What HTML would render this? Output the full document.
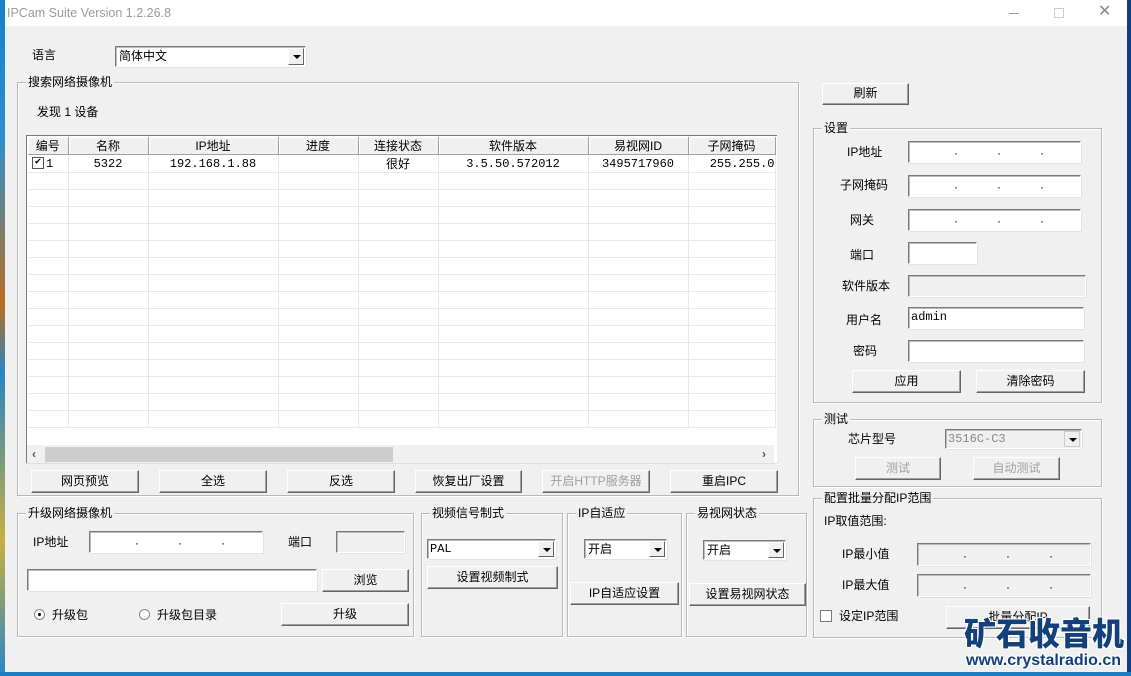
<!DOCTYPE html>
<html><head><meta charset="utf-8"><style>
*{box-sizing:border-box;margin:0;padding:0}
body{width:1131px;height:676px;overflow:hidden;background:#f0f0f0;position:relative;font-family:"Liberation Sans","Noto Sans CJK SC",sans-serif;font-size:12px;color:#000}
.a{position:absolute;white-space:nowrap;line-height:14px}
.btn{position:absolute;background:#f0f0f0;border-top:1px solid #fff;border-left:1px solid #fff;border-right:1px solid #646464;border-bottom:1px solid #646464;box-shadow:inset -1px -1px 0 #a0a0a0;text-align:center;font-size:12px}
.dis{color:#a0a0a0}
.in{position:absolute;background:#fff;border-top:1px solid #7a7a7a;border-left:1px solid #7a7a7a;border-right:1px solid #fff;border-bottom:1px solid #fff;box-shadow:inset 1px 1px 0 #bcbcbc, 1px 1px 0 #e3e3e3}
.g{background:#f0f0f0}
.grp{position:absolute;border:1px solid #b8b8b8;box-shadow:inset 1px 1px 0 #fff,1px 1px 0 #fff}
.gt{position:absolute;top:-8px;left:8px;background:#f0f0f0;padding:0 2px;line-height:14px;white-space:nowrap}
.dots{position:absolute;font-size:12px;line-height:12px}
.arr{position:absolute;right:1px;top:1px;bottom:1px;width:16px;background:#f0f0f0;border-left:1px solid #fff;border-top:1px solid #fff;border-right:1px solid #646464;border-bottom:1px solid #646464}
.arr:after{content:"";position:absolute;left:4px;top:6px;border-left:4px solid transparent;border-right:4px solid transparent;border-top:4px solid #000}
table{border-collapse:collapse;position:absolute;left:28px;top:137px;font-family:"Liberation Mono","Noto Sans CJK SC",monospace;font-size:12px}
td,th{border-right:1px solid #e8e8e8;border-bottom:1px solid #e8e8e8;height:17px;padding:0;text-align:center;font-weight:normal;white-space:nowrap;overflow:hidden}
th{background:#f0f0f0;border-right:1px solid #a0a0a0;border-bottom:1px solid #a0a0a0;box-shadow:inset 1px 1px 0 #fff;font-family:"Liberation Sans","Noto Sans CJK SC",sans-serif;height:17px}
</style></head><body>
<div style="position:absolute;left:0;top:0;width:5px;height:676px;background:linear-gradient(#1680c8,#2b8fd0 20%,#b86e22 45%,#2a84c4 55%,#c8b040 80%,#2a84c4)"></div>
<div style="position:absolute;left:1127px;top:0;width:4px;height:676px;background:#123c8c"></div>
<div style="position:absolute;left:0;top:672px;width:1131px;height:4px;background:#1a7ec0"></div>
<div style="position:absolute;left:5px;top:0;width:1122px;height:26px;background:#fff"></div>
<div class="a" style="left:7px;top:6px;color:#9a9a9a;font-size:12.5px">IPCam Suite Version 1.2.26.8</div>
<div style="position:absolute;left:1009px;top:13px;width:10px;height:1px;background:#999"></div>
<div style="position:absolute;left:1054px;top:8px;width:10px;height:10px;border:1px solid #ccc"></div>
<div class="a" style="left:1098px;top:5px;color:#888;font-size:16px">✕</div>

<div class="a" style="left:32px;top:48px">语言</div>
<div class="in" style="left:115px;top:46px;width:191px;height:21px"><span class="a" style="left:3px;top:2px">简体中文</span><div class="arr"></div></div>

<div class="grp" style="left:17px;top:82px;width:782px;height:414px"><div class="gt">搜索网络摄像机</div></div>
<div class="a" style="left:37px;top:105px">发现 1 设备</div>
<div style="position:absolute;left:26px;top:135px;width:751px;height:328px;background:#fff;border-left:1px solid #7a7a7a;border-top:1px solid #7a7a7a"></div>
<table>
<tr><th style="width:40px">编号</th><th style="width:80px">名称</th><th style="width:130px">IP地址</th><th style="width:80px">进度</th><th style="width:80px">连接状态</th><th style="width:150px">软件版本</th><th style="width:100px">易视网ID</th><th style="width:87px">子网掩码</th></tr>
<tr><td style="text-align:left"><span style="display:inline-block;width:12px;height:12px;border:1px solid #555;vertical-align:middle;margin-left:4px;margin-right:2px;font-size:10px;line-height:10px;text-align:center">✔</span>1</td><td>5322</td><td>192.168.1.88</td><td></td><td style="font-family:'Noto Sans CJK SC'">很好</td><td>3.5.50.572012</td><td>3495717960</td><td style="text-align:right">255.255.0</td></tr>
<tr><td></td><td></td><td></td><td></td><td></td><td></td><td></td><td></td></tr>
<tr><td></td><td></td><td></td><td></td><td></td><td></td><td></td><td></td></tr>
<tr><td></td><td></td><td></td><td></td><td></td><td></td><td></td><td></td></tr>
<tr><td></td><td></td><td></td><td></td><td></td><td></td><td></td><td></td></tr>
<tr><td></td><td></td><td></td><td></td><td></td><td></td><td></td><td></td></tr>
<tr><td></td><td></td><td></td><td></td><td></td><td></td><td></td><td></td></tr>
<tr><td></td><td></td><td></td><td></td><td></td><td></td><td></td><td></td></tr>
<tr><td></td><td></td><td></td><td></td><td></td><td></td><td></td><td></td></tr>
<tr><td></td><td></td><td></td><td></td><td></td><td></td><td></td><td></td></tr>
<tr><td></td><td></td><td></td><td></td><td></td><td></td><td></td><td></td></tr>
<tr><td></td><td></td><td></td><td></td><td></td><td></td><td></td><td></td></tr>
<tr><td></td><td></td><td></td><td></td><td></td><td></td><td></td><td></td></tr>
<tr><td></td><td></td><td></td><td></td><td></td><td></td><td></td><td></td></tr>
<tr><td></td><td></td><td></td><td></td><td></td><td></td><td></td><td></td></tr>
<tr><td></td><td></td><td></td><td></td><td></td><td></td><td></td><td></td></tr>
</table>
<div style="position:absolute;left:27px;top:445px;width:747px;height:18px;background:#f0f0f0"></div>
<div style="position:absolute;left:45px;top:447px;width:348px;height:15px;background:#cdcdcd"></div>
<div class="a" style="left:32px;top:447px;color:#555;font-weight:bold">‹</div>
<div class="a" style="left:762px;top:447px;color:#555;font-weight:bold">›</div>
<div style="position:absolute;left:26px;top:463px;width:751px;height:1px;background:#ddd"></div>

<div class="btn" style="left:31px;top:470px;width:108px;height:23px;line-height:20px">网页预览</div>
<div class="btn" style="left:159px;top:470px;width:108px;height:23px;line-height:20px">全选</div>
<div class="btn" style="left:287px;top:470px;width:108px;height:23px;line-height:20px">反选</div>
<div class="btn" style="left:415px;top:470px;width:107px;height:23px;line-height:20px">恢复出厂设置</div>
<div class="btn dis" style="left:542px;top:470px;width:108px;height:23px;line-height:20px">开启HTTP服务器</div>
<div class="btn" style="left:670px;top:470px;width:108px;height:23px;line-height:20px">重启IPC</div>

<div class="btn" style="left:822px;top:83px;width:87px;height:22px;line-height:19px">刷新</div>
<div class="grp" style="left:813px;top:128px;width:289px;height:275px"><div class="gt">设置</div></div>
<div class="a" style="left:847px;top:145px">IP地址</div>
<div class="a" style="left:840px;top:178px">子网掩码</div>
<div class="a" style="left:850px;top:213px">网关</div>
<div class="a" style="left:850px;top:248px">端口</div>
<div class="a" style="left:842px;top:279px">软件版本</div>
<div class="a" style="left:846px;top:313px">用户名</div>
<div class="a" style="left:853px;top:344px">密码</div>
<div class="in" style="left:908px;top:141px;width:173px;height:22px"><span class="dots" style="left:45px;top:5px">·</span><span class="dots" style="left:88px;top:5px">·</span><span class="dots" style="left:131px;top:5px">·</span></div>
<div class="in" style="left:908px;top:175px;width:173px;height:22px"><span class="dots" style="left:45px;top:5px">·</span><span class="dots" style="left:88px;top:5px">·</span><span class="dots" style="left:131px;top:5px">·</span></div>
<div class="in" style="left:908px;top:209px;width:173px;height:22px"><span class="dots" style="left:45px;top:5px">·</span><span class="dots" style="left:88px;top:5px">·</span><span class="dots" style="left:131px;top:5px">·</span></div>
<div class="in" style="left:908px;top:242px;width:69px;height:22px"></div>
<div class="in g" style="left:908px;top:275px;width:178px;height:22px"></div>
<div class="in" style="left:908px;top:307px;width:176px;height:22px"><span class="a" style="left:2px;top:2px;font-family:'Liberation Mono',monospace">admin</span></div>
<div class="in" style="left:908px;top:340px;width:176px;height:22px"></div>
<div class="btn" style="left:852px;top:370px;width:109px;height:23px;line-height:20px">应用</div>
<div class="btn" style="left:976px;top:370px;width:109px;height:23px;line-height:20px">清除密码</div>

<div class="grp" style="left:813px;top:419px;width:289px;height:68px"><div class="gt">测试</div></div>
<div class="a" style="left:848px;top:432px">芯片型号</div>
<div class="in g" style="left:945px;top:429px;width:137px;height:20px"><span class="a" style="left:2px;top:2px;color:#888;font-family:'Liberation Mono',monospace">3516C-C3</span><div class="arr" style="border-color:#ccc"></div></div>
<div class="btn dis" style="left:855px;top:457px;width:86px;height:23px;line-height:20px">测试</div>
<div class="btn dis" style="left:973px;top:457px;width:87px;height:23px;line-height:20px">自动测试</div>

<div class="grp" style="left:813px;top:498px;width:289px;height:140px"><div class="gt">配置批量分配IP范围</div></div>
<div class="a" style="left:824px;top:514px">IP取值范围:</div>
<div class="a" style="left:842px;top:547px">IP最小值</div>
<div class="a" style="left:842px;top:578px">IP最大值</div>
<div class="in g" style="left:917px;top:543px;width:174px;height:23px"><span class="dots" style="left:45px;top:6px">·</span><span class="dots" style="left:88px;top:6px">·</span><span class="dots" style="left:131px;top:6px">·</span></div>
<div class="in g" style="left:917px;top:574px;width:174px;height:23px"><span class="dots" style="left:45px;top:6px">·</span><span class="dots" style="left:88px;top:6px">·</span><span class="dots" style="left:131px;top:6px">·</span></div>
<div style="position:absolute;left:820px;top:610px;width:12px;height:12px;background:#fff;border:1px solid #777"></div>
<div class="a" style="left:839px;top:609px">设定IP范围</div>
<div class="btn" style="left:946px;top:606px;width:144px;height:23px;line-height:20px">批量分配IP</div>

<div class="grp" style="left:17px;top:513px;width:397px;height:124px"><div class="gt">升级网络摄像机</div></div>
<div class="a" style="left:33px;top:535px">IP地址</div>
<div class="in" style="left:89px;top:531px;width:174px;height:22px"><span class="dots" style="left:45px;top:5px">·</span><span class="dots" style="left:88px;top:5px">·</span><span class="dots" style="left:131px;top:5px">·</span></div>
<div class="a" style="left:288px;top:535px">端口</div>
<div class="in g" style="left:336px;top:531px;width:69px;height:22px"></div>
<div class="in" style="left:27px;top:569px;width:290px;height:22px"></div>
<div class="btn" style="left:322px;top:569px;width:87px;height:23px;line-height:20px">浏览</div>
<div style="position:absolute;left:34px;top:609px;width:11px;height:11px;border-radius:50%;background:#fff;border:1px solid #888"><div style="position:absolute;left:3px;top:3px;width:3px;height:3px;background:#000;border-radius:50%"></div></div>
<div class="a" style="left:52px;top:608px">升级包</div>
<div style="position:absolute;left:139px;top:609px;width:11px;height:11px;border-radius:50%;background:#fff;border:1px solid #888"></div>
<div class="a" style="left:157px;top:608px">升级包目录</div>
<div class="btn" style="left:281px;top:603px;width:128px;height:23px;line-height:20px">升级</div>

<div class="grp" style="left:421px;top:513px;width:142px;height:124px"><div class="gt">视频信号制式</div></div>
<div class="in" style="left:427px;top:539px;width:129px;height:20px"><span class="a" style="left:2px;top:2px;font-family:'Liberation Mono',monospace">PAL</span><div class="arr"></div></div>
<div class="btn" style="left:427px;top:566px;width:131px;height:23px;line-height:20px">设置视频制式</div>

<div class="grp" style="left:567px;top:513px;width:115px;height:124px"><div class="gt">IP自适应</div></div>
<div class="in" style="left:584px;top:539px;width:83px;height:20px"><span class="a" style="left:3px;top:2px">开启</span><div class="arr"></div></div>
<div class="btn" style="left:570px;top:582px;width:109px;height:23px;line-height:20px">IP自适应设置</div>

<div class="grp" style="left:686px;top:513px;width:121px;height:124px"><div class="gt">易视网状态</div></div>
<div class="in" style="left:703px;top:540px;width:83px;height:20px"><span class="a" style="left:3px;top:2px">开启</span><div class="arr"></div></div>
<div class="btn" style="left:689px;top:583px;width:117px;height:23px;line-height:20px">设置易视网状态</div>

<div class="a" style="left:964px;top:613px;font-size:32px;line-height:38px;font-weight:900;color:#13407a;letter-spacing:0px;font-family:'Noto Sans CJK SC',sans-serif;text-shadow:1px 1px 0 #fff,-1px -1px 0 #fff,1px -1px 0 #fff,-1px 1px 0 #fff">矿石收音机</div>
<div class="a" style="left:966px;top:652px;font-size:16px;line-height:18px;font-weight:bold;color:#13407a;text-shadow:1px 1px 0 #fff,-1px -1px 0 #fff,1px -1px 0 #fff,-1px 1px 0 #fff">www.crystalradio.cn</div>
</body></html>
